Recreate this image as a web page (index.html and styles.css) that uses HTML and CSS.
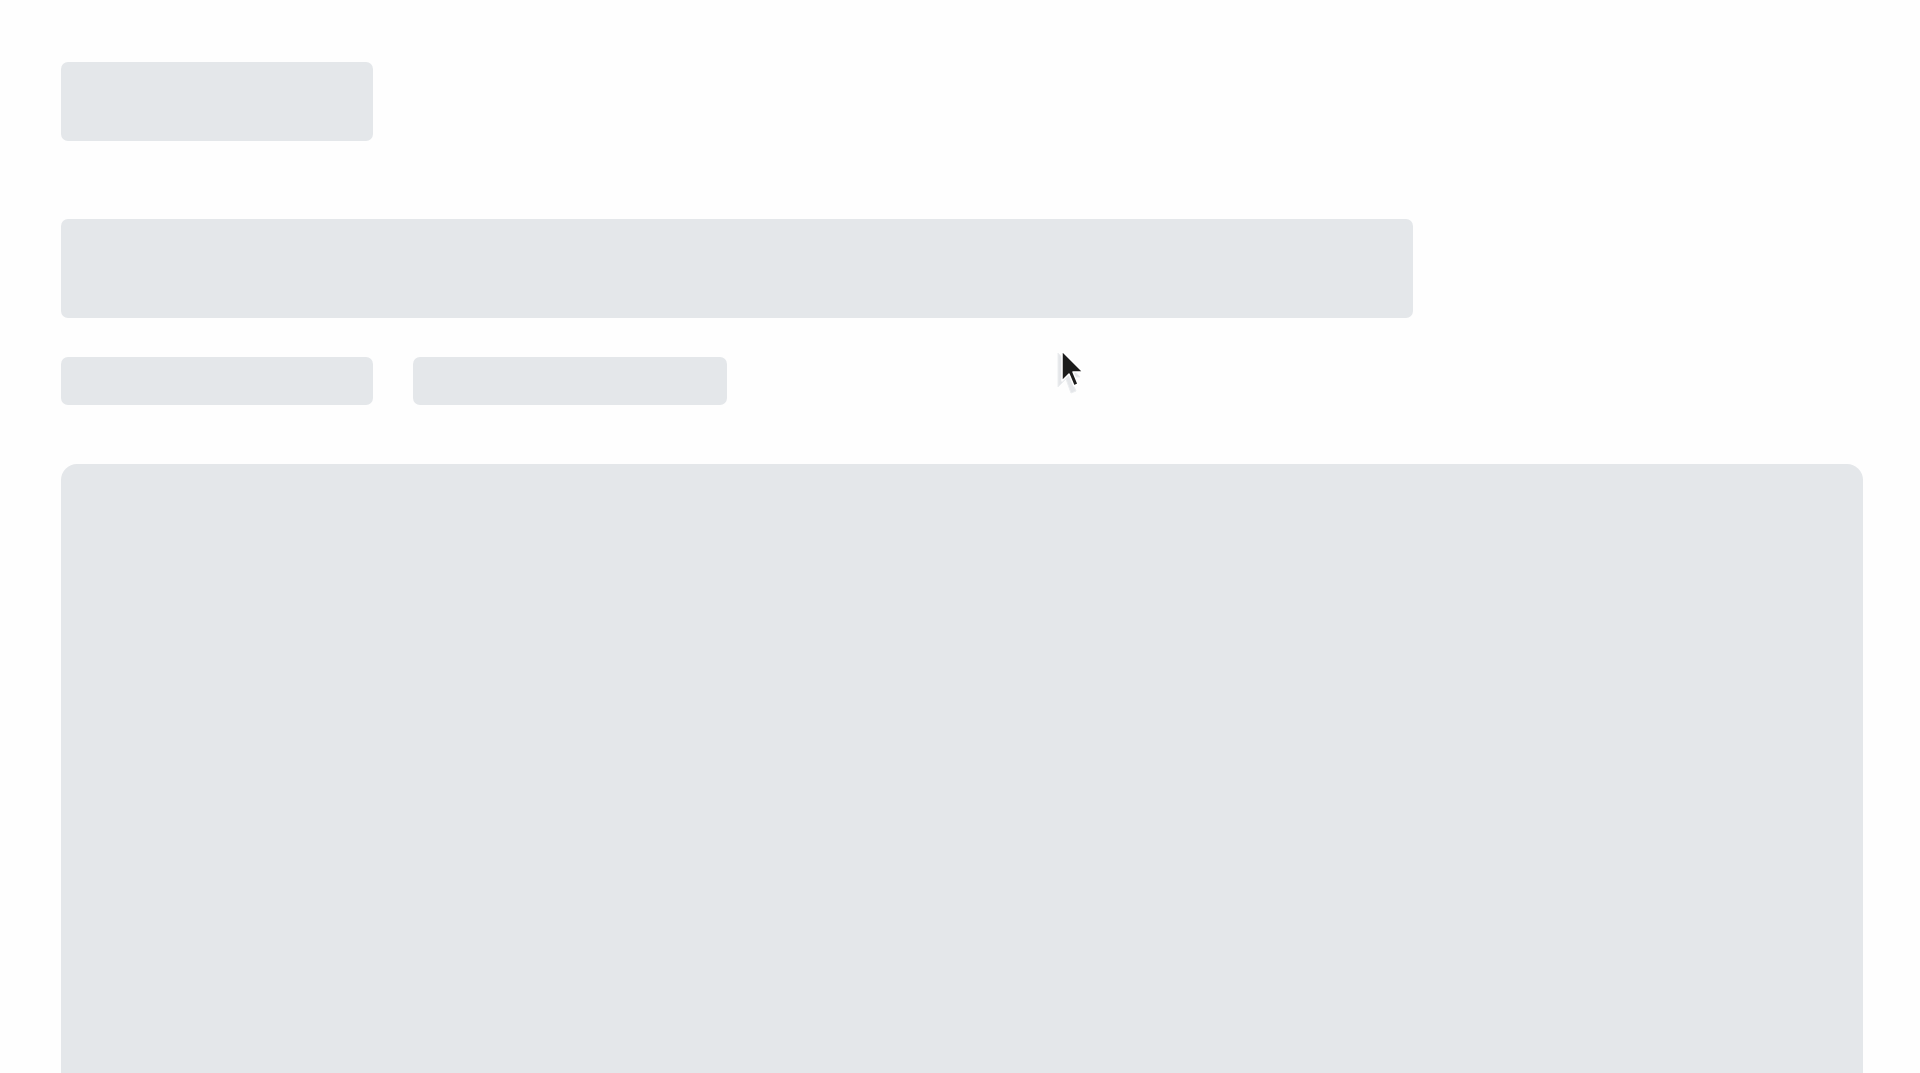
FILE: index.html
```html
<!DOCTYPE html>
<html lang="en">
<head>
<meta charset="utf-8">
<title>Loading</title>
<link rel="stylesheet" href="styles.css">
</head>
<body>
<main class="page">
  <div class="sk sk-title"></div>
  <div class="sk sk-bar"></div>
  <div class="sk-row">
    <div class="sk sk-chip"></div>
    <div class="sk sk-chip sk-chip-wide"></div>
  </div>
  <div class="sk sk-panel"></div>
</main>
<svg class="cursor" width="36" height="54" viewBox="0 0 36 54" aria-hidden="true">
  <path class="cursor-ghost" d="M1,6 L1,40 L9,32 L14,46 L19,44 L13,30 L23,30 Z"/>
  <path class="cursor-main" d="M5,4 L5,34 L12,27 L17,39 L21,37 L16,25 L26,25 Z"/>
</svg>
</body>
</html>
```
FILE: styles.css
```css
html, body {
  margin: 0;
  padding: 0;
  height: 100%;
  overflow: hidden;
  background: #fefefe;
  font-family: "Inter", "Liberation Sans", sans-serif;
}

.page {
  display: flex;
  flex-direction: column;
  align-items: flex-start;
  padding: 62px 57px 0 61px;
  box-sizing: border-box;
  height: 100%;
}

.sk {
  background: #e4e7ea;
  border-radius: 7px;
}

.sk-title {
  width: 312px;
  height: 79px;
  margin-bottom: 78px;
}

.sk-bar {
  width: 75%;
  height: 99px;
  margin-bottom: 39px;
}

.sk-row {
  display: flex;
  gap: 40px;
  margin-bottom: 59px;
}

.sk-chip {
  width: 312px;
  height: 48px;
}

.sk-chip-wide {
  width: 314px;
}

.sk-panel {
  align-self: stretch;
  flex: 1;
  border-radius: 16px 16px 0 0;
}

.cursor {
  position: absolute;
  left: 1057px;
  top: 347px;
}

.cursor-ghost {
  fill: #e4e6e9;
  stroke: #eceef0;
  stroke-width: 1;
}

.cursor-main {
  fill: #1c1c1c;
  stroke: #ffffff;
  stroke-width: 1.5;
  stroke-linejoin: round;
}
```
